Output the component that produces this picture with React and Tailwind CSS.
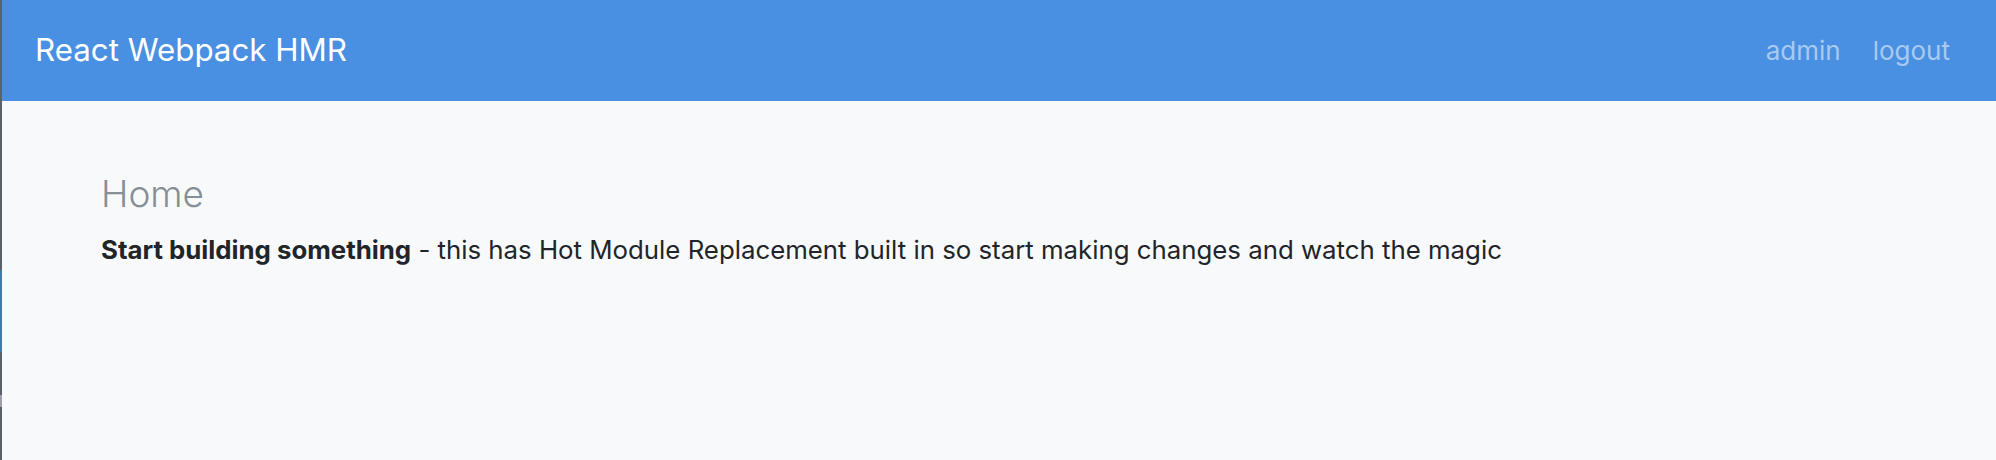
import React from "react";

const App = () => {
  return (
    <div
      className="flex h-[460px] w-full bg-[#f8f9fa]"
      style={{ fontFamily: "Inter, 'Noto Sans', sans-serif" }}
    >
      {/* window edge */}
      <div className="flex w-[2px] flex-col bg-[#5b6168]">
        <div className="h-[270px]" />
        <div className="h-[82px] bg-[#3b7fa6]" />
        <div className="h-[43px]" />
        <div className="h-[12px] bg-[#9aa0a6]" />
      </div>

      <div className="flex flex-1 flex-col">
        <nav className="flex h-[101px] items-center justify-between bg-[#4a90e2] pl-[33px] pr-[46px]">
          <a className="text-[31.3px] text-white">React Webpack HMR</a>
          <div className="flex items-center gap-[32px] text-[26px] text-[#a8c9f1]">
            <a>admin</a>
            <a>logout</a>
          </div>
        </nav>

        <main className="px-[99px] pt-[70px]">
          <h1 className="text-[37px] font-light leading-tight text-[#868e96]">
            Home
          </h1>
          <p className="mt-[14px] text-[25.8px] text-[#212529]">
            <strong className="font-bold">Start building something</strong> -
            this has Hot Module Replacement built in so start making changes and
            watch the magic
          </p>
        </main>
      </div>
    </div>
  );
};

export default App;
